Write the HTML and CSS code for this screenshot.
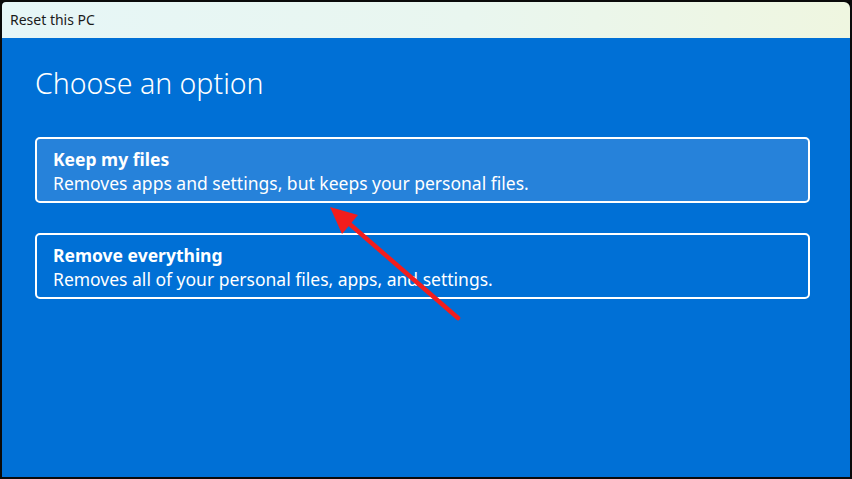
FILE: index.html
```html
<!DOCTYPE html>
<html>
<head>
<meta charset="utf-8">
<link rel="stylesheet" href="styles.css">
</head>
<body>
<div class="window">
  <div class="titlebar">Reset this PC</div>
  <div class="content">
    <h1 class="heading">Choose an option</h1>
    <div class="options">
      <div class="option option-selected">
        <div class="option-title">Keep my files</div>
        <div class="option-desc">Removes apps and settings, but keeps your personal files.</div>
      </div>
      <div class="option">
        <div class="option-title">Remove everything</div>
        <div class="option-desc">Removes all of your personal files, apps, and settings.</div>
      </div>
    </div>
    <svg class="arrow" width="852" height="479" viewBox="0 0 852 479">
      <line x1="458" y1="318" x2="345" y2="220" stroke="#f21d1d" stroke-width="4.5" stroke-linecap="round"/>
      <polygon points="330,207 358,215 342,234" fill="#f21d1d"/>
    </svg>
  </div>
</div>
</body>
</html>
```
FILE: styles.css
```css
html, body {
  margin: 0;
  padding: 0;
  background: #000;
  width: 852px;
  height: 479px;
  overflow: hidden;
}
.window {
  box-sizing: border-box;
  width: 852px;
  height: 479px;
  border: 2px solid #0a0a0a;
  display: flex;
  flex-direction: column;
  font-family: "Noto Sans", "Open Sans", sans-serif;
  position: relative;
}
.titlebar {
  height: 36px;
  background: linear-gradient(to right, #e6f6f7, #e9f6ef 55%, #eff6e0);
  color: #1a1a1a;
  font-size: 14px;
  line-height: 36px;
  padding-left: 8px;
  border-top-left-radius: 4px;
  border-top-right-radius: 6px;
}
.content {
  flex: 1;
  background: #0070d6;
  padding: 0 40px 0 33px;
}
.heading {
  margin: 25px 0 0 0;
  font-weight: 300;
  font-size: 28.5px;
  line-height: 40px;
  color: #fff;
}
.options {
  margin-top: 34px;
  display: flex;
  flex-direction: column;
  gap: 30px;
}
.option {
  box-sizing: border-box;
  height: 66px;
  border: 2px solid #fff;
  border-radius: 5px;
  padding: 8px 16px 0 16px;
  color: #fff;
}
.option-selected {
  background: #2682da;
}
.option-title {
  font-weight: 700;
  font-size: 17.5px;
  line-height: 24px;
}
.option-desc {
  font-size: 17.5px;
  line-height: 24px;
}
.arrow {
  position: absolute;
  left: -2px;
  top: -2px;
  pointer-events: none;
}
```
